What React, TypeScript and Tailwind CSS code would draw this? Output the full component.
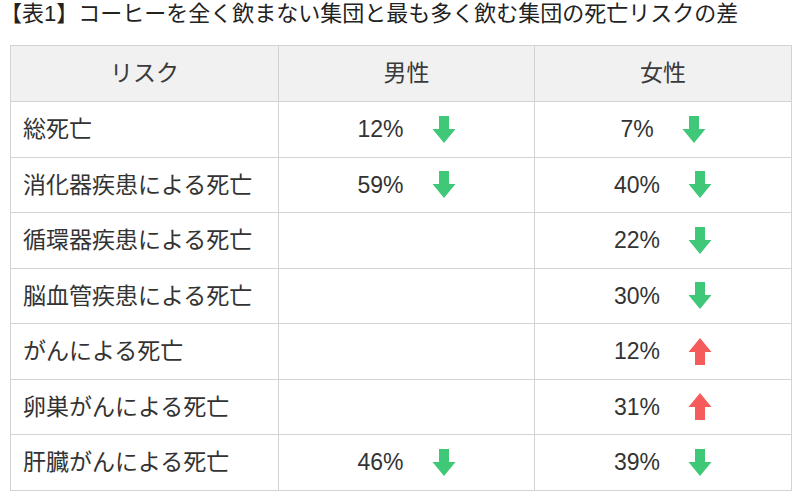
import React from 'react'

type Dir = 'down' | 'up'

interface Cell {
  value: string
  dir: Dir
}

interface Row {
  label: string
  male?: Cell
  female?: Cell
}

const rows: Row[] = [
  { label: '総死亡', male: { value: '12%', dir: 'down' }, female: { value: '7%', dir: 'down' } },
  { label: '消化器疾患による死亡', male: { value: '59%', dir: 'down' }, female: { value: '40%', dir: 'down' } },
  { label: '循環器疾患による死亡', female: { value: '22%', dir: 'down' } },
  { label: '脳血管疾患による死亡', female: { value: '30%', dir: 'down' } },
  { label: 'がんによる死亡', female: { value: '12%', dir: 'up' } },
  { label: '卵巣がんによる死亡', female: { value: '31%', dir: 'up' } },
  { label: '肝臓がんによる死亡', male: { value: '46%', dir: 'down' }, female: { value: '39%', dir: 'down' } },
]

const Arrow = ({ dir }: { dir: Dir }) => (
  <svg width="24" height="29" viewBox="0 0 24 29" className="shrink-0">
    {dir === 'down' ? (
      <path d="M7 1h10v13h6.5L12 28 0.5 14H7z" fill="#3fc878" />
    ) : (
      <path d="M7 28h10V15h6.5L12 1 0.5 15H7z" fill="#f65b5b" />
    )}
  </svg>
)

const ValueCell = ({ cell }: { cell?: Cell }) => (
  <td className="border border-[#d3d3d3] p-0">
    {cell && (
      <div className="flex items-center justify-center gap-[28px]">
        <span>{cell.value}</span>
        <Arrow dir={cell.dir} />
      </div>
    )}
  </td>
)

export default function App() {
  return (
    <div
      className="w-[800px] h-[499px] bg-white text-[#333] overflow-hidden"
      style={{ fontFamily: '"Liberation Sans", "Noto Sans CJK JP", sans-serif' }}
    >
      <h1 className="text-[22px] leading-[26px] pt-[1px] font-normal text-[#222] whitespace-nowrap">
        【表1】コーヒーを全く飲まない集団と最も多く飲む集団の死亡リスクの差
      </h1>
      <table className="ml-[10px] mt-[18px] border-collapse text-[23px] table-fixed w-[781px]">
        <colgroup>
          <col className="w-[268px]" />
          <col className="w-[256px]" />
          <col className="w-[257px]" />
        </colgroup>
        <thead>
          <tr className="h-[56px] bg-[#f1f1f1]">
            <th className="border border-[#d3d3d3] font-normal text-[#3a3a3a]">リスク</th>
            <th className="border border-[#d3d3d3] font-normal text-[#3a3a3a]">男性</th>
            <th className="border border-[#d3d3d3] font-normal text-[#3a3a3a]">女性</th>
          </tr>
        </thead>
        <tbody>
          {rows.map((row) => (
            <tr key={row.label} className="h-[55.5px]">
              <td className="border border-[#d3d3d3] p-0 pl-[12px]">{row.label}</td>
              <ValueCell cell={row.male} />
              <ValueCell cell={row.female} />
            </tr>
          ))}
        </tbody>
      </table>
    </div>
  )
}
